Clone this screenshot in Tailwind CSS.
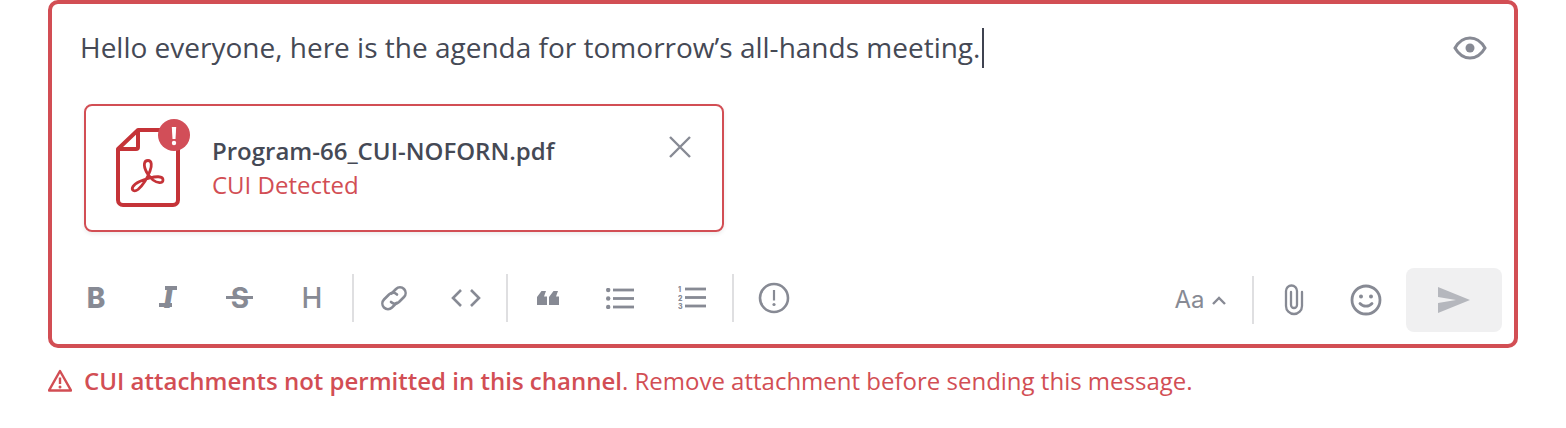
<!doctype html>
<html>
<head>
<meta charset="utf-8">
<script src="https://cdn.jsdelivr.net/npm/@tailwindcss/browser@4"></script>
</head>
<body class="bg-white">
<div class="w-[1566px] h-[428px] overflow-hidden px-12 font-['Open_Sans',sans-serif]">
  <div class="h-[348px] border-4 border-[#d24e54] rounded-[10px] flex flex-col bg-white">
    <div class="h-[88px] shrink-0 pl-[28px] pr-[27px] flex items-center justify-between">
      <div class="flex items-center text-[28px] text-[#454955]">
        <span class="pb-[2px]">Hello everyone, here is the agenda for tomorrow’s all-hands meeting.</span>
        <span class="w-[2px] h-[40px] bg-[#3f4350] ml-[2px]"></span>
      </div>
      <svg width="34" height="24" viewBox="0 0 34 24" fill="none" stroke="#878a94" stroke-width="3"><path d="M2 12C6 5 11 2 17 2s11 3 15 10c-4 7-9 10-15 10S6 19 2 12Z"/><circle cx="17" cy="12" r="4.500" fill="#878a94" stroke="none"/></svg>
    </div>
    <div class="ml-[32px] mt-3 w-[640px] h-[128px] shrink-0 border-2 border-[#d24e54] rounded-[8px] flex items-start shadow-[0_2px_4px_rgba(0,0,0,0.08)]">
      <svg class="ml-[26px] mt-[10px] shrink-0" width="80" height="94" viewBox="112 116 80 94" fill="none">
        <path d="M138 130H172a6 6 0 0 1 6 6V200a5 5 0 0 1-5 5H123a5 5 0 0 1-5-5V149Z" stroke="#c53338" stroke-width="4" stroke-linejoin="round"/>
        <path d="M118 149H136a2 2 0 0 0 2-2V130" stroke="#c53338" stroke-width="4" stroke-linejoin="round"/>
        <path d="M146.500 172C143 165 144 160.500 148 160.500C152 160.500 152 166 150 171C147 179 142 186 138 189.500C134 192.500 131 190 133 186.500C135 183 143 179.500 150 178C155 176.500 163 175.500 163 180C163 184 157 183 153 180C150.500 178 148 175 146.500 172Z" stroke="#c53338" stroke-width="2.800" stroke-linejoin="round"/>
        <circle cx="174" cy="135" r="16" fill="#d24e58"/>
        <path d="M171.800 127H176.200L175.500 139H172.500Z" fill="#fff"/>
        <circle cx="174" cy="143" r="2.200" fill="#fff"/>
      </svg>
      <div class="ml-[20px] mt-[27px] flex flex-col">
        <span class="text-[24px] leading-[36px] font-semibold text-[#454955]">Program-66_CUI-NOFORN.pdf</span>
        <span class="text-[24px] leading-[32px] text-[#d24e54]">CUI Detected</span>
      </div>
      <svg class="ml-auto mr-[30px] mt-[29px] shrink-0" width="24" height="24" viewBox="0 0 24 24" fill="none" stroke="#878a94" stroke-width="2.400"><path d="M2 2L22 22M22 2L2 22"/></svg>
    </div>
    <div class="mt-9 h-16 shrink-0 pl-2 pr-3 flex items-center text-[#878a94]">
      <div class="h-[60px] self-start flex items-center">
        <div class="w-[72px] h-[60px] flex items-center justify-center font-['Inter',sans-serif] font-extrabold text-[28px]">B</div>
        <div class="w-[72px] h-[60px] flex items-center justify-center relative font-['Inter',sans-serif] font-black italic text-[28px]">I<span class="absolute left-[33px] top-[18px] w-[12px] h-[4px] bg-[#878a94]"></span><span class="absolute left-[27px] top-[35px] w-[13px] h-[4px] bg-[#878a94]"></span></div>
        <div class="w-[72px] h-[60px] flex items-center justify-center relative font-['Inter',sans-serif] font-bold text-[28px]">S<span class="absolute left-[22px] top-[28px] w-[27px] h-[3px] bg-[#878a94]"></span></div>
        <div class="w-[72px] h-[60px] flex items-center justify-center font-['Inter',sans-serif] font-medium text-[28px]">H</div>
        <div class="mx-1 w-[2px] h-12 bg-[#dfdfe1]"></div>
        <div class="w-[72px] h-[60px] flex items-center justify-center">
          <svg width="30" height="30" viewBox="0 0 30 30" fill="none" stroke="#878a94" stroke-width="2.600" stroke-linecap="round"><path d="M12.500 10.500L17 6a5.800 5.800 0 0 1 8 0a5.800 5.800 0 0 1 0 8l-5 5a5.800 5.800 0 0 1-8 0"/><path d="M18 11.500a5.800 5.800 0 0 0-8 0l-5 5a5.800 5.800 0 0 0 0 8a5.800 5.800 0 0 0 8 0l4.500-4.500"/></svg>
        </div>
        <div class="w-[72px] h-[60px] flex items-center justify-center">
          <svg width="32" height="20" viewBox="0 0 32 20" fill="none" stroke="#878a94" stroke-width="2.600"><path d="M11 2L3 10L11 18M21 2L29 10L21 18"/></svg>
        </div>
        <div class="mx-1 w-[2px] h-12 bg-[#dfdfe1]"></div>
        <div class="w-[72px] h-[60px] flex items-center justify-center">
          <svg width="22" height="14" viewBox="0 0 22 14" fill="#878a94"><path d="M4.500 0H9L7 5.500H10V14H0V6ZM16.500 0H21L19 5.500H22V14H12V6Z"/></svg>
        </div>
        <div class="w-[72px] h-[60px] flex items-center justify-center">
          <svg width="28" height="21" viewBox="0 0 28 21" fill="#878a94"><circle cx="2.200" cy="2" r="2.200"/><circle cx="2.200" cy="10.500" r="2.200"/><circle cx="2.200" cy="19" r="2.200"/><rect x="7" y="0.600" width="21" height="2.800"/><rect x="7" y="9.100" width="21" height="2.800"/><rect x="7" y="17.600" width="21" height="2.800"/></svg>
        </div>
        <div class="w-[72px] h-[60px] flex items-center justify-center">
          <svg width="28" height="24" viewBox="0 0 28 24" fill="#878a94"><text x="0" y="6" font-size="7" font-weight="800" font-family="Inter">1</text><text x="0" y="14.500" font-size="7" font-weight="800" font-family="Inter">2</text><text x="0" y="23" font-size="7" font-weight="800" font-family="Inter">3</text><rect x="7" y="1.600" width="21" height="2.800"/><rect x="7" y="10.100" width="21" height="2.800"/><rect x="7" y="18.600" width="21" height="2.800"/></svg>
        </div>
        <div class="mx-1 w-[2px] h-12 bg-[#dfdfe1]"></div>
        <div class="w-[72px] h-[60px] flex items-center justify-center">
          <svg width="32" height="32" viewBox="0 0 32 32" fill="none"><circle cx="16" cy="16" r="14" stroke="#878a94" stroke-width="2.600"/><path d="M16 8V18.500" stroke="#878a94" stroke-width="2.200"/><circle cx="16" cy="22.500" r="1.600" fill="#878a94"/></svg>
        </div>
      </div>
      <div class="ml-auto w-[88px] h-16 flex items-center justify-center gap-[7px] font-['Inter',sans-serif] text-[24px] mr-[8px]">
        <span>Aa</span>
        <svg width="14" height="9" viewBox="0 0 14 9" fill="none" stroke="#878a94" stroke-width="2.400"><path d="M1 8L7 2L13 8"/></svg>
      </div>
      <div class="mr-1 w-[2px] h-12 bg-[#dfdfe1]"></div>
      <div class="w-[72px] h-16 flex items-center justify-center">
        <svg width="20" height="32" viewBox="0 0 20 32" fill="none" stroke="#878a94" stroke-width="2.300" stroke-linecap="round"><path d="M7 8V21a3 3 0 0 0 6 0V7a5.500 5.500 0 0 0-11 0V22a8 8 0 0 0 16 0V8"/></svg>
      </div>
      <div class="w-[72px] h-16 flex items-center justify-center">
        <svg width="32" height="32" viewBox="0 0 32 32" fill="none"><circle cx="16" cy="16" r="14" stroke="#878a94" stroke-width="2.800"/><circle cx="11" cy="12.500" r="2" fill="#878a94"/><circle cx="21" cy="12.500" r="2" fill="#878a94"/><path d="M10 19.500c3.200 3.500 8.800 3.500 12 0" stroke="#878a94" stroke-width="2.800" stroke-linecap="round"/></svg>
      </div>
      <div class="ml-1 w-24 h-16 rounded-[8px] bg-[#f0f0f1] flex items-center justify-center">
        <svg width="32" height="26" viewBox="0 0 32 26" fill="#b5b7bd"><path d="M0 0L32 13L0 26V16L18 13L0 10Z"/></svg>
      </div>
    </div>
  </div>
  <div class="mt-[17px] flex items-center text-[24px] leading-[32px] text-[#d24e54]">
    <svg class="shrink-0 mr-[12px]" width="24" height="24" viewBox="0 0 24 24" fill="none"><path d="M12 2L23 21.500H1Z" stroke="#d24e54" stroke-width="2.400" stroke-linejoin="round"/><path d="M12 8.500V15" stroke="#d24e54" stroke-width="2.400"/><circle cx="12" cy="18" r="1.500" fill="#d24e54"/></svg>
    <span><span class="font-semibold">CUI attachments not permitted in this channel</span>. Remove attachment before sending this message.</span>
  </div>
</div>
</body>
</html>
